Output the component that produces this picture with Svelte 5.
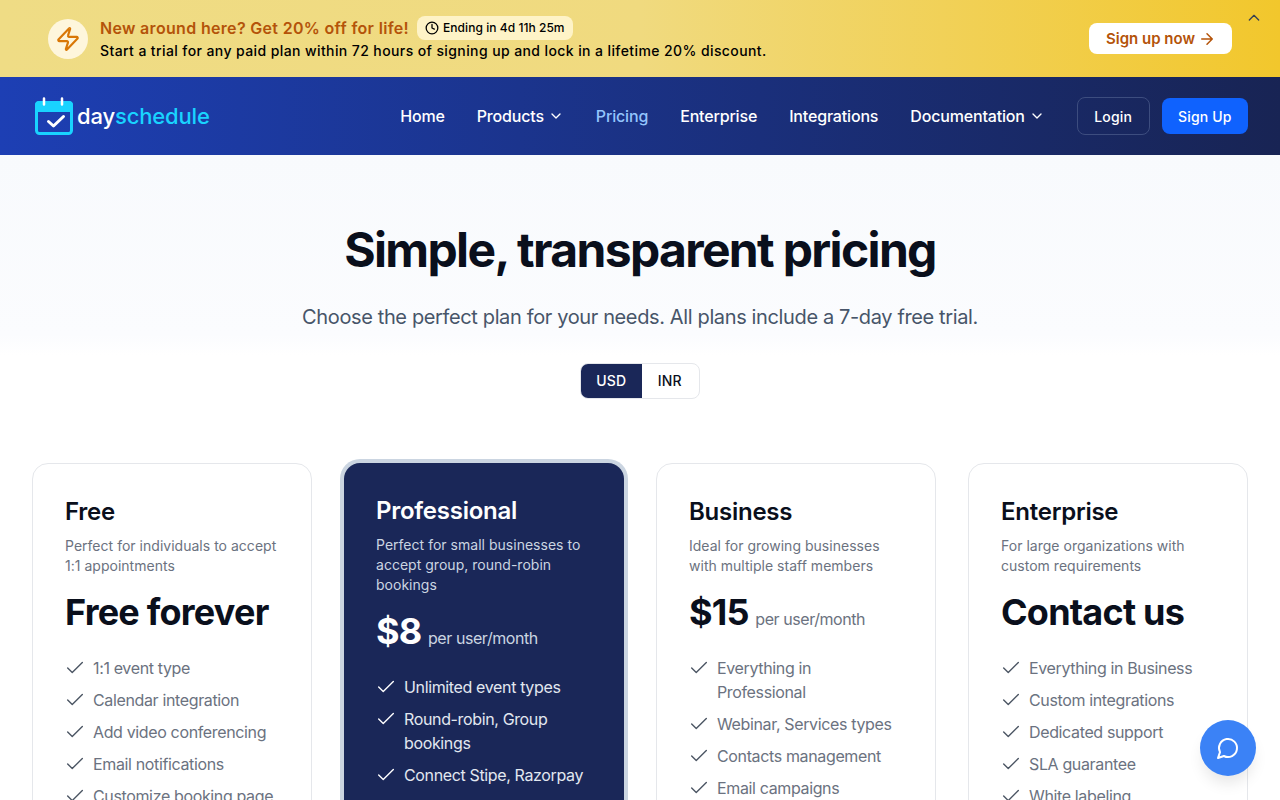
<script>
  const nav = [
    { label: 'Home' },
    { label: 'Products', caret: true },
    { label: 'Pricing', current: true },
    { label: 'Enterprise' },
    { label: 'Integrations' },
    { label: 'Documentation', caret: true }
  ];

  const plans = [
    {
      name: 'Free',
      desc: 'Perfect for individuals to accept 1:1 appointments',
      price: 'Free forever',
      features: ['1:1 event type', 'Calendar integration', 'Add video conferencing', 'Email notifications', 'Customize booking page']
    },
    {
      name: 'Professional',
      desc: 'Perfect for small businesses to accept group, round-robin bookings',
      price: '$8',
      per: 'per user/month',
      featured: true,
      features: ['Unlimited event types', 'Round-robin, Group bookings', 'Connect Stipe, Razorpay', 'Remove branding']
    },
    {
      name: 'Business',
      desc: 'Ideal for growing businesses with multiple staff members',
      price: '$15',
      per: 'per user/month',
      features: ['Everything in Professional', 'Webinar, Services types', 'Contacts management', 'Email campaigns']
    },
    {
      name: 'Enterprise',
      desc: 'For large organizations with custom requirements',
      price: 'Contact us',
      features: ['Everything in Business', 'Custom integrations', 'Dedicated support', 'SLA guarantee', 'White labeling']
    }
  ];
</script>

<div class="page">
  <div class="promo">
    <div class="promo-left">
      <span class="bolt">
        <svg width="26" height="26" viewBox="0 0 24 24" fill="none" stroke="currentColor" stroke-width="2" stroke-linecap="round" stroke-linejoin="round">
          <path d="M4 14a1 1 0 0 1-.78-1.630l9.900-10.200a.5.5 0 0 1 .86.460l-1.920 6.020A1 1 0 0 0 13 10h7a1 1 0 0 1 .78 1.630l-9.900 10.200a.5.5 0 0 1-.86-.460l1.920-6.020A1 1 0 0 0 11 14z" />
        </svg>
      </span>
      <div>
        <div class="promo-head">
          <strong>New around here? Get 20% off for life!</strong>
          <span class="timer">
            <svg width="14" height="14" viewBox="0 0 24 24" fill="none" stroke="currentColor" stroke-width="2.200" stroke-linecap="round" stroke-linejoin="round">
              <circle cx="12" cy="12" r="10" />
              <path d="M12 6v6l4 2" />
            </svg>
            Ending in 4d 11h 25m
          </span>
        </div>
        <div class="promo-sub">Start a trial for any paid plan within 72 hours of signing up and lock in a lifetime 20% discount.</div>
      </div>
    </div>
    <a class="promo-cta" href="#signup">Sign up now
      <svg width="18" height="18" viewBox="0 0 24 24" fill="none" stroke="currentColor" stroke-width="2" stroke-linecap="round" stroke-linejoin="round">
        <path d="M5 12h14M12 5l7 7-7 7" />
      </svg>
    </a>
    <button class="collapse" aria-label="Collapse">
      <svg width="16" height="16" viewBox="0 0 24 24" fill="none" stroke="currentColor" stroke-width="2" stroke-linecap="round" stroke-linejoin="round">
        <path d="m5 15 7-7 7 7" />
      </svg>
    </button>
  </div>

  <header class="topbar">
    <a class="logo" href="#home">
      <svg width="38" height="38" viewBox="0 0 38 38" fill="none">
        <rect x="1.500" y="5.500" width="35" height="31" rx="3" stroke="#19d3ff" stroke-width="3" />
        <path d="M0 8a4 4 0 0 1 4-4h30a4 4 0 0 1 4 4v7H0Z" fill="#19d3ff" />
        <path d="M9 1.500v6M27 1.500v6" stroke="#fff" stroke-width="2.500" stroke-linecap="round" />
        <path d="m13.500 24.500 5 4.500 10-9.500" stroke="#fff" stroke-width="3" stroke-linecap="round" stroke-linejoin="round" />
      </svg>
      <span class="wordmark">day<span>schedule</span></span>
    </a>
    <nav>
      {#each nav as item}
        <a href="#x" class:current={item.current}>
          {item.label}
          {#if item.caret}
            <svg width="16" height="16" viewBox="0 0 24 24" fill="none" stroke="currentColor" stroke-width="2" stroke-linecap="round" stroke-linejoin="round">
              <path d="m6 9 6 6 6-6" />
            </svg>
          {/if}
        </a>
      {/each}
    </nav>
    <div class="auth">
      <a class="login" href="#login">Login</a>
      <a class="signup" href="#signup">Sign Up</a>
    </div>
  </header>

  <main>
    <section class="hero">
      <h1>Simple, transparent pricing</h1>
      <p>Choose the perfect plan for your needs. All plans include a 7-day free trial.</p>
    </section>
    <div class="currency">
      <button class="on">USD</button>
      <button>INR</button>
    </div>
    <div class="plans">
      {#each plans as plan}
        <article class="plan" class:featured={plan.featured}>
          <h3>{plan.name}</h3>
          <p class="desc">{plan.desc}</p>
          <div class="price">
            <b>{plan.price}</b>
            {#if plan.per}<span>{plan.per}</span>{/if}
          </div>
          <ul>
            {#each plan.features as f}
              <li>
                <svg width="22" height="22" viewBox="0 0 24 24" fill="none" stroke="currentColor" stroke-width="1.500" stroke-linecap="round" stroke-linejoin="round">
                  <path d="M20 6 9 17l-5-5" />
                </svg>
                <span>{f}</span>
              </li>
            {/each}
          </ul>
        </article>
      {/each}
    </div>
  </main>

  <button class="chat" aria-label="Chat">
    <svg width="24" height="24" viewBox="0 0 24 24" fill="none" stroke="currentColor" stroke-width="2" stroke-linecap="round" stroke-linejoin="round">
      <path d="M7.900 20A9 9 0 1 0 4 16.100L2 22Z" />
    </svg>
  </button>
</div>

<style>
  :global(body) {
    margin: 0;
    background: #fff;
    overflow: hidden;
  }
  .page {
    height: 800px;
    overflow: hidden;
    font-family: Inter, "Liberation Sans", sans-serif;
    color: #0a0f1c;
  }
  a {
    text-decoration: none;
    color: inherit;
  }
  button {
    font: inherit;
    border: 0;
    background: none;
    cursor: pointer;
  }

  .promo {
    position: relative;
    height: 77px;
    box-sizing: border-box;
    padding: 0 48px;
    display: flex;
    align-items: center;
    justify-content: space-between;
    background: linear-gradient(90deg, #efdc85 0%, #f0da7f 50%, #f2c72c 100%);
  }
  .promo-left {
    display: flex;
    align-items: center;
    gap: 12px;
  }
  .bolt {
    width: 40px;
    height: 40px;
    border-radius: 50%;
    background: #fef6dc;
    color: #d97706;
    display: flex;
    align-items: center;
    justify-content: center;
  }
  .promo-head {
    display: flex;
    align-items: center;
    gap: 8px;
    height: 24px;
  }
  .promo-head strong {
    font-size: 16px;
    font-weight: 600;
    letter-spacing: 0.32px;
    color: #b45309;
  }
  .timer {
    display: inline-flex;
    align-items: center;
    gap: 4px;
    height: 24px;
    padding: 0 8px;
    border-radius: 8px;
    background: #fef3c7;
    font-size: 12px;
    font-weight: 500;
    letter-spacing: 0.05px;
    color: #000;
  }
  .promo-sub {
    font-size: 14px;
    font-weight: 500;
    letter-spacing: 0.4px;
    line-height: 22px;
    color: #000;
  }
  .promo-cta {
    display: flex;
    align-items: center;
    gap: 3px;
    height: 31px;
    padding: 0 16px 0 17px;
    border-radius: 8px;
    background: #fff;
    color: #b45309;
    font-size: 15px;
    font-weight: 600;
  }
  .collapse {
    position: absolute;
    top: 10px;
    right: 18px;
    padding: 0;
    display: flex;
    color: #374151;
  }

  .topbar {
    height: 78px;
    box-sizing: border-box;
    padding: 0 32px;
    display: flex;
    align-items: center;
    background: linear-gradient(90deg, #1d3fb4 0%, #182454 100%);
    color: #fff;
  }
  .logo {
    display: flex;
    align-items: center;
    gap: 4px;
    margin-left: 3px;
  }
  .wordmark {
    font-size: 22px;
    font-weight: 500;
    letter-spacing: -0.15px;
  }
  .wordmark span {
    color: #19d3ff;
  }
  nav {
    margin-left: auto;
    display: flex;
    align-items: center;
    gap: 32px;
  }
  nav a {
    display: flex;
    align-items: center;
    gap: 4px;
    font-size: 16px;
    font-weight: 500;
    letter-spacing: -0.17px;
  }
  nav a.current {
    color: #93c5fd;
  }
  .auth {
    display: flex;
    align-items: center;
    gap: 12px;
    margin-left: 32px;
  }
  .login,
  .signup {
    display: flex;
    align-items: center;
    font-size: 14px;
    font-weight: 500;
    letter-spacing: 0.15px;
    border-radius: 8px;
    height: 36px;
    padding: 0 16.500px;
  }
  .login {
    border: 1px solid #3d4d7f;
  }
  .signup {
    background: #0f62fe;
  }

  .hero {
    height: 200px;
    box-sizing: border-box;
    padding-top: 65px;
    text-align: center;
    background: linear-gradient(180deg, #f8fafd 0%, #fbfcfe 90%, #fff 100%);
  }
  h1 {
    margin: 0;
    font-size: 48px;
    line-height: 60px;
    font-weight: 700;
    letter-spacing: -1.65px;
  }
  .hero p {
    margin: 23px 0 0;
    font-size: 20px;
    line-height: 28px;
    letter-spacing: -0.37px;
    color: #475569;
  }
  .currency {
    width: max-content;
    margin: 8px auto 0;
    display: flex;
    height: 36px;
    border-radius: 8px;
    overflow: hidden;
    box-sizing: border-box;
    border: 1px solid #e5e7eb;
  }
  .currency button {
    padding: 0 17px 1px 16px;
    font-size: 14px;
    font-weight: 450;
    letter-spacing: 0.2px;
    color: #0a0f1c;
  }
  .currency button.on {
    margin: -1px 0 -1px -1px;
    padding-right: 15.500px;
    background: #1a2758;
    color: #fff;
  }

  .plans {
    margin-top: 64px;
    padding: 0 32px;
    display: grid;
    grid-template-columns: repeat(4, 1fr);
    gap: 32px;
  }
  .plan {
    box-sizing: border-box;
    height: 600px;
    padding: 32px;
    border: 1px solid #e5e7eb;
    border-radius: 16px;
    background: #fff;
  }
  .plan.featured {
    border: 0;
    background: #1a2758;
    box-shadow: 0 0 0 4px #cbd5e1;
    color: #fff;
  }
  h3 {
    margin: 0;
    font-size: 24px;
    line-height: 32px;
    font-weight: 600;
    letter-spacing: -0.25px;
  }
  .desc {
    margin: 8px 0 0;
    font-size: 14px;
    line-height: 20px;
    letter-spacing: 0.02px;
    color: #6b7280;
  }
  .featured .desc {
    color: #cbd5e1;
  }
  .price {
    margin-top: 16px;
    display: flex;
    align-items: baseline;
    gap: 6.500px;
  }
  .price b {
    font-size: 36px;
    line-height: 40px;
    font-weight: 700;
    letter-spacing: -0.78px;
  }
  .price span {
    font-size: 16px;
    letter-spacing: -0.43px;
    color: #6b7280;
  }
  .featured .price span {
    color: #cbd5e1;
  }
  ul {
    list-style: none;
    margin: 24px 0 0;
    padding: 0;
    display: flex;
    flex-direction: column;
    gap: 8px;
  }
  li {
    display: flex;
    gap: 7px;
    font-size: 16px;
    line-height: 24px;
    letter-spacing: -0.36px;
    color: #6b7280;
  }
  li svg {
    flex: none;
    margin: 1px 0 0 -1px;
    color: #4b5563;
  }
  .featured li {
    color: #e2e8f0;
  }
  .featured li svg {
    color: #fff;
  }

  .chat {
    position: fixed;
    right: 24px;
    bottom: 24px;
    width: 56px;
    height: 56px;
    padding: 0;
    border-radius: 50%;
    background: #3b82f6;
    color: #fff;
    display: flex;
    align-items: center;
    justify-content: center;
    box-shadow: 0 10px 15px -3px rgba(0, 0, 0, 0.1);
  }
</style>
